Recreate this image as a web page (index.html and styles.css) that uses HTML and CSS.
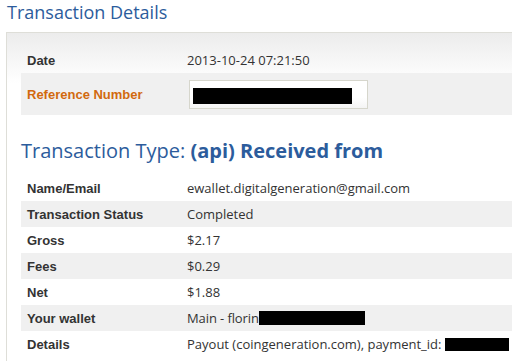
FILE: index.html
```html
<!DOCTYPE html>
<html>
<head>
<meta charset="utf-8">
<link rel="stylesheet" href="styles.css">
</head>
<body>
<h1 class="title">Transaction Details</h1>
<div class="panel">
  <div class="table first">
    <div class="row">
      <div class="label">Date</div>
      <div class="value">2013-10-24 07:21:50</div>
    </div>
    <div class="row alt ref">
      <div class="label orange">Reference Number</div>
      <div class="value"><div class="inputbox"><span class="redact r1"></span></div></div>
    </div>
  </div>
  <h2 class="type">Transaction Type: <b>(api) Received from</b></h2>
  <div class="table">
    <div class="row"><div class="label">Name/Email</div><div class="value">ewallet.digitalgeneration@gmail.com</div></div>
    <div class="row alt"><div class="label">Transaction Status</div><div class="value">Completed</div></div>
    <div class="row"><div class="label">Gross</div><div class="value">$2.17</div></div>
    <div class="row alt"><div class="label">Fees</div><div class="value">$0.29</div></div>
    <div class="row"><div class="label">Net</div><div class="value">$1.88</div></div>
    <div class="row alt"><div class="label">Your wallet</div><div class="value"><span class="tight">Main - florin</span><span class="redact r2"></span></div></div>
    <div class="row"><div class="label">Details</div><div class="value">Payout (coingeneration.com), payment_id: <span class="redact r3"></span></div></div>
  </div>
</div>
</body>
</html>
```
FILE: styles.css
```css
html, body {
  margin: 0;
  padding: 0;
  background: #fff;
  overflow: hidden;
}
body {
  width: 512px;
  height: 361px;
  font-family: "Open Sans", "DejaVu Sans", sans-serif;
  color: #333;
}
.title {
  margin: 0;
  padding: 0 0 0 7px;
  height: 32px;
  font-size: 18px;
  line-height: 24px;
  font-weight: normal;
  color: #2c5c9c;
}
.panel {
  margin-left: 6px;
  margin-right: -20px;
  border-top: 1px solid #deded8;
  border-left: 1px solid #deded8;
  background: linear-gradient(#ececec 0px, #fff 50px);
  padding: 14px 0 0 14px;
  height: 314px;
  overflow: hidden;
}
.table {
  display: flex;
  flex-direction: column;
}
.row {
  display: grid;
  grid-template-columns: 166px 1fr;
  align-items: center;
  height: 26px;
  font-size: 13px;
}
.row.alt {
  background: #f0f0f0;
}
.row.ref {
  height: 42px;
}
.label {
  padding-left: 6px;
  font-family: "Liberation Sans", Arial, sans-serif;
  font-weight: bold;
  font-size: 13px;
  color: #333;
}
.label.orange {
  color: #d2690e;
}
.value {
  display: flex;
  align-items: center;
  white-space: pre;
  color: #333;
}
.tight {
  letter-spacing: -0.1px;
}
.inputbox {
  margin-left: 2px;
  width: 174px;
  height: 27px;
  border: 1px solid #d6d6cc;
  background: linear-gradient(#fff 0%, #fff 60%, #f4f4f4 100%);
  display: flex;
  align-items: center;
  padding-left: 3px;
  box-sizing: content-box;
}
.redact {
  display: inline-block;
  background: #000;
}
.r1 {
  width: 159px;
  height: 16px;
  margin-top: 3px;
}
.r2 {
  width: 106px;
  height: 14px;
}
.r3 {
  width: 64px;
  height: 13px;
}
.type {
  margin: 0;
  height: 60px;
  padding-top: 22px;
  box-sizing: border-box;
  font-size: 20px;
  line-height: 28px;
  font-weight: normal;
  color: #2c5c9c;
}
.type b {
  font-weight: bold;
}
```
